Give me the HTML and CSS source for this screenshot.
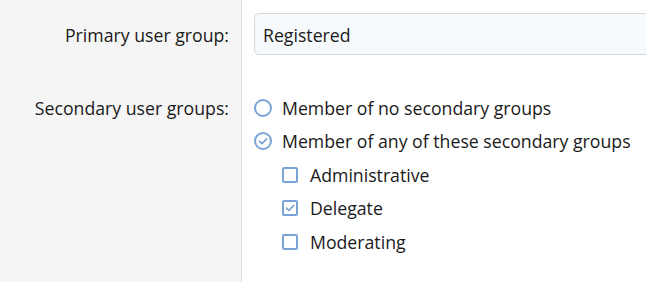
FILE: index.html
```html
<!DOCTYPE html>
<html lang="en">
<head>
    <meta charset="UTF-8">
    <title>User criteria</title>
    <link rel="stylesheet" href="styles.css">
</head>
<body>
    <div class="form-block">
        <div class="form-row">
            <div class="form-label">
                <label for="primaryGroup">Primary user group:</label>
            </div>
            <div class="form-field">
                <select id="primaryGroup" class="input">
                    <option>Registered</option>
                </select>
            </div>
        </div>

        <div class="form-row form-row-choices">
            <div class="form-label">
                <label>Secondary user groups:</label>
            </div>
            <div class="form-field">
                <ul class="choice-list">
                    <li class="choice">
                        <span class="radio"></span>
                        <span>Member of no secondary groups</span>
                    </li>
                    <li class="choice">
                        <span class="radio is-checked">
                            <svg viewBox="0 0 14 14"><path d="M3.6 7.3l2.4 2.4 4.5-4.6"/></svg>
                        </span>
                        <span>Member of any of these secondary groups</span>
                    </li>
                    <li class="choice choice-sub">
                        <span class="checkbox"></span>
                        <span>Administrative</span>
                    </li>
                    <li class="choice choice-sub">
                        <span class="checkbox is-checked">
                            <svg viewBox="0 0 12 12"><path d="M2.4 6.2l2.4 2.3 4.8-4.9"/></svg>
                        </span>
                        <span>Delegate</span>
                    </li>
                    <li class="choice choice-sub">
                        <span class="checkbox"></span>
                        <span>Moderating</span>
                    </li>
                </ul>
            </div>
        </div>
    </div>
</body>
</html>
```

FILE: styles.css
```css
:root {
    --label-bg: #f5f5f5;
    --divider: #e2e2e2;
    --text-color: #1a1a1a;
    --input-bg: #f7fafd;
    --input-border: #d5d8dc;
    --choice-color: #7ba4d6;
}

* {
    margin: 0;
    padding: 0;
    box-sizing: border-box;
}

html, body {
    height: 100%;
}

body {
    font-family: "Open Sans", "Noto Sans", sans-serif;
    font-size: 17.7px;
    line-height: 24px;
    color: var(--text-color);
    background-color: #ffffff;
}

.form-block {
    min-height: 100%;
    display: flex;
    flex-direction: column;
    background: linear-gradient(to right, var(--label-bg) 241px, var(--divider) 241px, var(--divider) 242px, #ffffff 242px);
}

.form-row {
    display: flex;
}

.form-row-choices {
    flex: 1;
}

.form-label {
    width: 242px;
    flex-shrink: 0;
    text-align: right;
    padding-right: 13px;
}

.form-field {
    flex: 1;
    padding-left: 12px;
}

.form-row:first-child .form-label {
    padding-top: 23px;
}

.form-row:first-child .form-field {
    padding-top: 13px;
}

.input {
    display: block;
    width: 420px;
    height: 42px;
    padding: 2px 8px 0;
    font: inherit;
    color: var(--text-color);
    background-color: var(--input-bg);
    border: 1px solid var(--input-border);
    border-radius: 5px;
    appearance: none;
    outline: none;
}

.form-row-choices .form-label {
    padding-top: 41px;
}

.choice-list {
    list-style: none;
    padding-top: 36px;
}

.choice {
    display: flex;
    align-items: center;
    height: 33.5px;
}

.choice-sub {
    padding-left: 28px;
}

.radio,
.checkbox {
    flex-shrink: 0;
    display: inline-flex;
    border: 2px solid var(--choice-color);
    background-color: #ffffff;
}

.radio {
    width: 18px;
    height: 18px;
    border-radius: 50%;
    margin-right: 10px;
}

.checkbox {
    width: 16px;
    height: 16px;
    border-radius: 2px;
    margin-right: 12px;
}

.radio svg,
.checkbox svg {
    width: 100%;
    height: 100%;
    fill: none;
    stroke: var(--choice-color);
    stroke-width: 1.7;
    stroke-linecap: round;
    stroke-linejoin: round;
}
```
